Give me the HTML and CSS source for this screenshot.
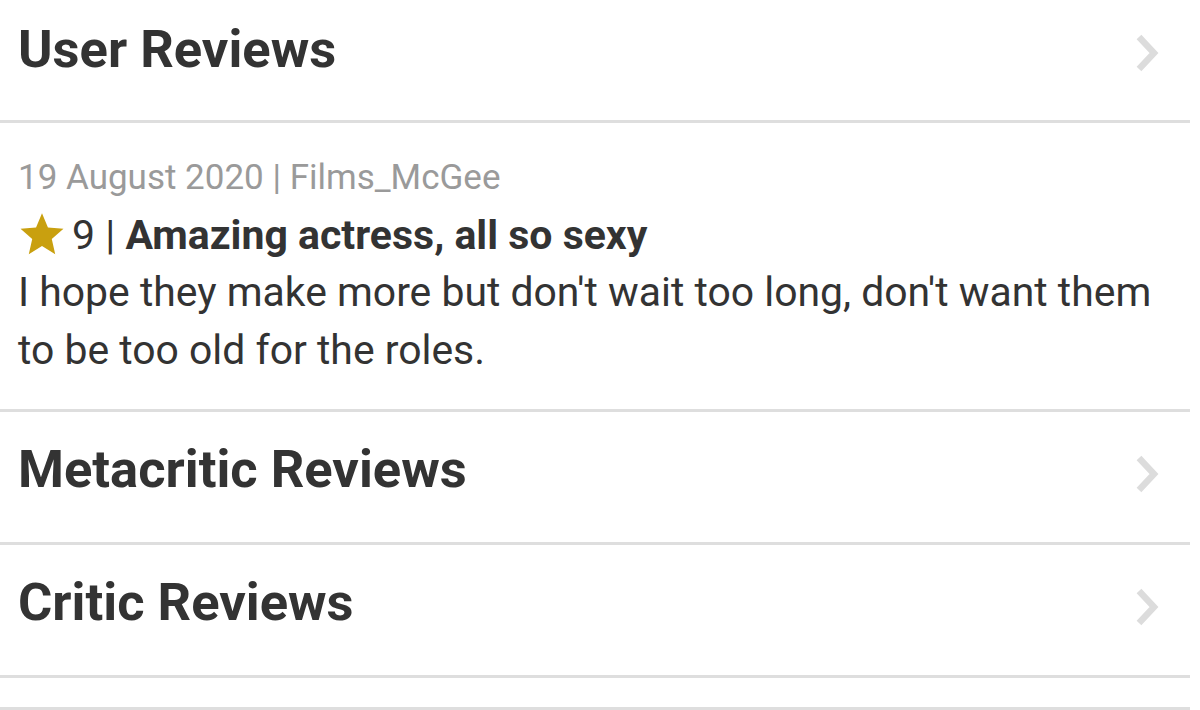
FILE: index.html
```html
<!DOCTYPE html>
<html>
<head>
<meta charset="utf-8">
<link rel="stylesheet" href="styles.css">
</head>
<body>
<div class="list">
  <div class="nav-row first">
    <h2 class="nav-title">User Reviews</h2>
    <svg class="chev" viewBox="0 0 28 38" width="28" height="38"><path d="M5 3 L20 19 L5 35" /></svg>
  </div>
  <div class="review">
    <div class="meta">19 August 2020 | Films_McGee</div>
    <div class="rating">
      <svg class="star" viewBox="0 0 24 24" width="48" height="46"><path d="M12 1.2 L15.1 8.6 L23.2 9.3 L17.1 14.6 L18.9 22.5 L12 18.3 L5.1 22.5 L6.9 14.6 L0.8 9.3 L8.9 8.6 Z"/></svg>
      <span class="score">9 | </span><span class="headline">Amazing actress, all so sexy</span>
    </div>
    <p class="body">I hope they make more but don't wait too long, don't want them to be too old for the roles.</p>
  </div>
  <div class="nav-row">
    <h2 class="nav-title">Metacritic Reviews</h2>
    <svg class="chev" viewBox="0 0 28 38" width="28" height="38"><path d="M5 3 L20 19 L5 35" /></svg>
  </div>
  <div class="nav-row">
    <h2 class="nav-title">Critic Reviews</h2>
    <svg class="chev" viewBox="0 0 28 38" width="28" height="38"><path d="M5 3 L20 19 L5 35" /></svg>
  </div>
  <div class="spacer"></div>
</div>
</body>
</html>
```
FILE: styles.css
```css
html, body {
  margin: 0;
  padding: 0;
  background: #ffffff;
}
body {
  font-family: Roboto, "Liberation Sans", sans-serif;
  color: #333333;
  width: 1200px;
  height: 710px;
  overflow: hidden;
}
.list {
  margin-right: 10px;
}
.nav-row {
  display: flex;
  justify-content: space-between;
  align-items: flex-start;
  height: 133px;
  box-sizing: border-box;
  border-bottom: 3px solid #dedede;
  padding: 27px 28px 0 18px;
}
.nav-row.first {
  height: 123px;
  padding-top: 19px;
}
.nav-title {
  margin: 0;
  font-size: 52.5px;
  font-weight: 700;
  line-height: 60px;
  color: #333333;
}
.chev {
  display: block;
  margin-top: 16px;
}
.nav-row.first .chev {
  margin-top: 15px;
}
.chev path {
  fill: none;
  stroke: #dcdcdc;
  stroke-width: 6.5;
  stroke-linejoin: miter;
}
.review {
  height: 289px;
  box-sizing: border-box;
  border-bottom: 3px solid #dedede;
  padding: 26px 14px 0 18px;
}
.meta {
  color: #9a9a9a;
  font-size: 35px;
  line-height: 58px;
}
.rating {
  display: flex;
  align-items: center;
  font-size: 41px;
  line-height: 56px;
}
.star {
  display: block;
  margin: 0 6px 3px 0;
}
.star path {
  fill: #c9a00f;
}
.score {
  white-space: pre;
}
.headline {
  font-weight: 700;
}
.body {
  margin: 0;
  font-size: 40.9px;
  line-height: 58px;
}
.spacer {
  height: 32px;
  box-sizing: border-box;
  border-bottom: 3px solid #dedede;
}
```
